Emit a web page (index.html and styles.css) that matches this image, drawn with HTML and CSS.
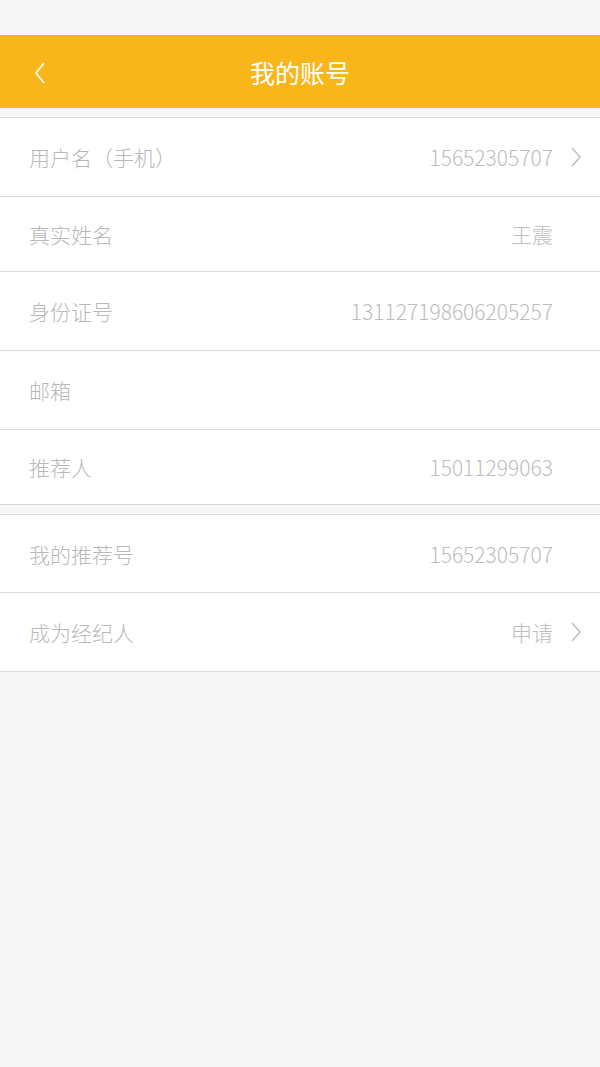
FILE: index.html
```html
<!DOCTYPE html>
<html lang="zh-CN">
<head>
   <meta charset="UTF-8">
   <meta name="viewport" content="width=device-width, initial-scale=1.0">
   <title>我的账号</title>
   <link rel="stylesheet" href="styles.css">
</head>
<body>
   <div class="status-bar"></div>
   <header class="top-bar">
      <a href="#" class="back-link">
         <svg width="12" height="22" viewBox="0 0 12 22"><polyline points="10,1 2,11 10,21" fill="none" stroke="#fff" stroke-width="1.6"/></svg>
      </a>
      <h1>我的账号</h1>
   </header>

   <div class="list-group">
      <a href="#" class="list-row">
         <span class="label">用户名（手机）</span>
         <span class="value">15652305707</span>
         <svg class="arrow" width="12" height="20" viewBox="0 0 12 20"><polyline points="2,1 10,10 2,19" fill="none" stroke="#bbb" stroke-width="1.4"/></svg>
      </a>
      <div class="list-row row-short">
         <span class="label">真实姓名</span>
         <span class="value">王震</span>
         <span class="arrow-space"></span>
      </div>
      <div class="list-row">
         <span class="label">身份证号</span>
         <span class="value">131127198606205257</span>
         <span class="arrow-space"></span>
      </div>
      <div class="list-row">
         <span class="label">邮箱</span>
         <span class="value"></span>
         <span class="arrow-space"></span>
      </div>
      <div class="list-row row-short">
         <span class="label">推荐人</span>
         <span class="value">15011299063</span>
         <span class="arrow-space"></span>
      </div>
   </div>

   <div class="list-group">
      <div class="list-row row-mid">
         <span class="label">我的推荐号</span>
         <span class="value">15652305707</span>
         <span class="arrow-space"></span>
      </div>
      <a href="#" class="list-row">
         <span class="label">成为经纪人</span>
         <span class="value">申请</span>
         <svg class="arrow" width="12" height="20" viewBox="0 0 12 20"><polyline points="2,1 10,10 2,19" fill="none" stroke="#bbb" stroke-width="1.4"/></svg>
      </a>
   </div>
</body>
</html>
```

FILE: styles.css
```css
body {
   margin: 0;
   background-color: #f7f7f7;
   font-family: "Noto Sans CJK SC", "Noto Sans", sans-serif;
   height: 100vh;
}
.status-bar {
   height: 35px;
   background-color: #f7f7f7;
}
.top-bar {
   height: 73px;
   background-color: #f9b61a;
   display: flex;
   align-items: center;
   justify-content: center;
   position: relative;
}
.top-bar h1 {
   margin: 0;
   color: #fff;
   font-size: 25px;
   font-weight: normal;
}
.back-link {
   position: absolute;
   left: 34px;
   top: 27px;
   display: flex;
}
.list-group {
   margin-top: 9px;
   background-color: #fff;
   border-top: 1px solid #dcdcdc;
}
.list-row {
   height: 78px;
   display: flex;
   align-items: center;
   padding: 0 18px 0 29px;
   border-bottom: 1px solid #d9d9d9;
   text-decoration: none;
   font-size: 21px;
   font-weight: 300;
}
.list-row.row-short {
   height: 74px;
}
.list-row.row-mid {
   height: 77px;
}
.label {
   color: #b8b8b8;
   flex: 1;
}
.value {
   color: #bdbdbd;
}
.arrow {
   margin-left: 17px;
   display: block;
}
.arrow-space {
   width: 12px;
   margin-left: 17px;
}
```
